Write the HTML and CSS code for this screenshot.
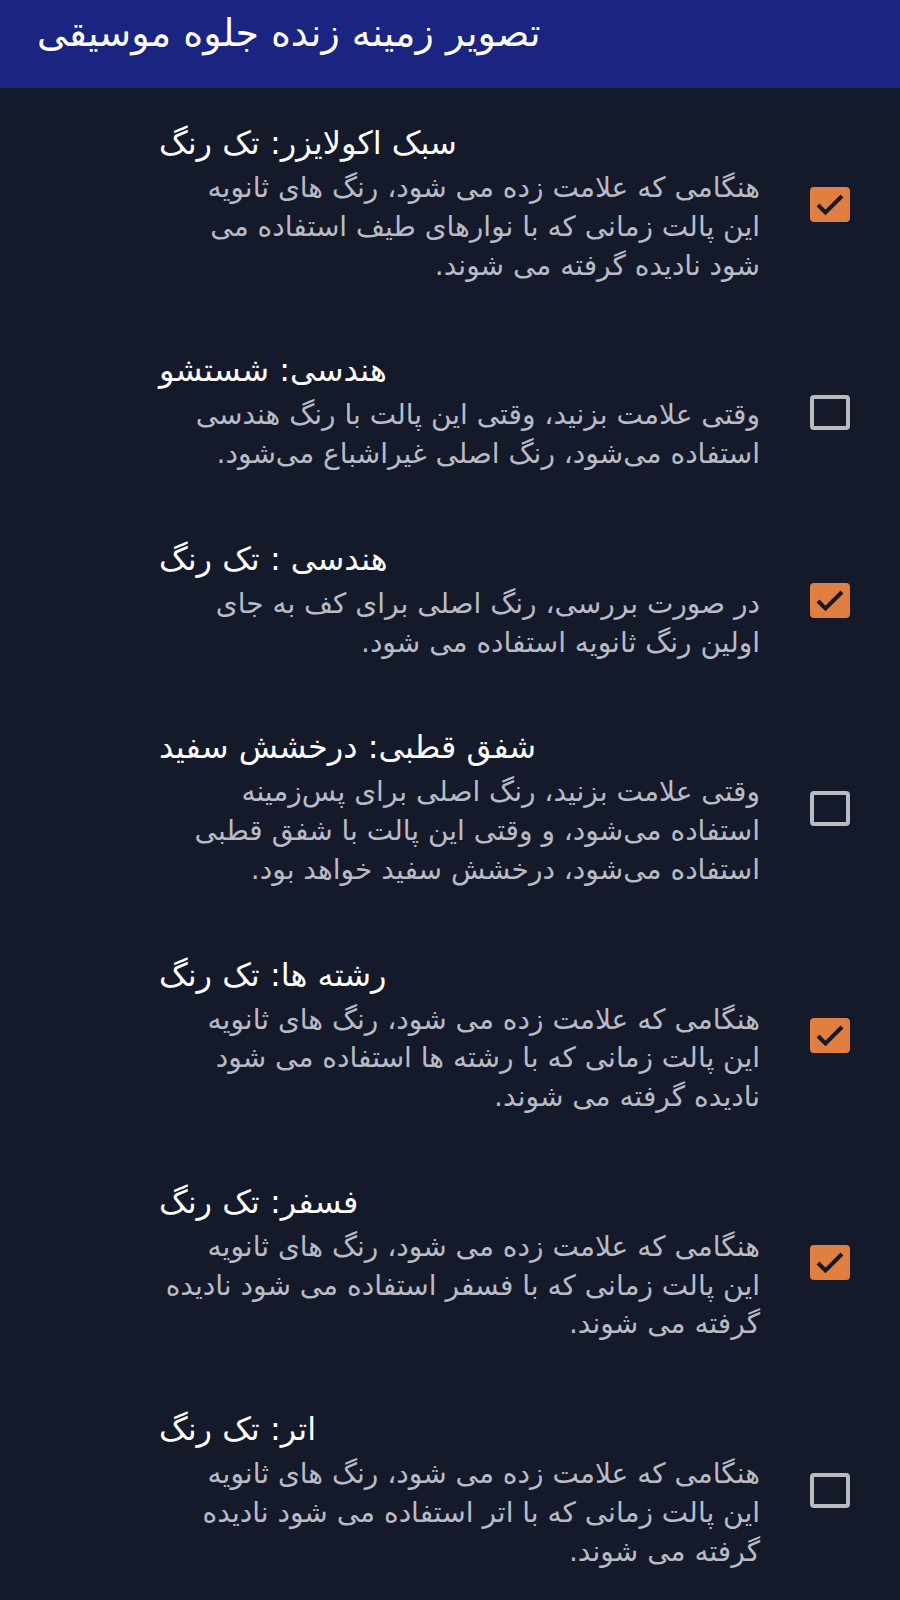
FILE: index.html
```html
<!DOCTYPE html>
<html lang="fa">
<head>
<meta charset="utf-8">
<title>تصویر زمینه زنده جلوه موسیقی</title>
<link rel="stylesheet" href="styles.css">
</head>
<body>
<header class="appbar"><h1 class="appbar-title">تصویر زمینه زنده جلوه موسیقی</h1></header>
<main class="list">
  <div class="item">
    <div class="text">
      <div class="title">سبک اکولایزر: تک رنگ</div>
      <div class="summary">هنگامی که علامت زده می شود، رنگ های ثانویه<br>این پالت زمانی که با نوارهای طیف استفاده می<br>شود نادیده گرفته می شوند.</div>
    </div>
    <div class="box checked"><svg viewBox="0 0 40 35" class="tick"><path d="M8 18 L15.5 25.5 L32 9" /></svg></div>
  </div>
  <div class="item">
    <div class="text">
      <div class="title">هندسی: شستشو</div>
      <div class="summary">وقتی علامت بزنید، وقتی این پالت با رنگ هندسی<br>استفاده می‌شود، رنگ اصلی غیراشباع می‌شود.</div>
    </div>
    <div class="box"></div>
  </div>
  <div class="item">
    <div class="text">
      <div class="title">هندسی : تک رنگ</div>
      <div class="summary">در صورت بررسی، رنگ اصلی برای کف به جای<br>اولین رنگ ثانویه استفاده می شود.</div>
    </div>
    <div class="box checked"><svg viewBox="0 0 40 35" class="tick"><path d="M8 18 L15.5 25.5 L32 9" /></svg></div>
  </div>
  <div class="item">
    <div class="text">
      <div class="title">شفق قطبی: درخشش سفید</div>
      <div class="summary">وقتی علامت بزنید، رنگ اصلی برای پس‌زمینه<br>استفاده می‌شود، و وقتی این پالت با شفق قطبی<br>استفاده می‌شود، درخشش سفید خواهد بود.</div>
    </div>
    <div class="box"></div>
  </div>
  <div class="item">
    <div class="text">
      <div class="title">رشته ها: تک رنگ</div>
      <div class="summary">هنگامی که علامت زده می شود، رنگ های ثانویه<br>این پالت زمانی که با رشته ها استفاده می شود<br>نادیده گرفته می شوند.</div>
    </div>
    <div class="box checked"><svg viewBox="0 0 40 35" class="tick"><path d="M8 18 L15.5 25.5 L32 9" /></svg></div>
  </div>
  <div class="item">
    <div class="text">
      <div class="title">فسفر: تک رنگ</div>
      <div class="summary">هنگامی که علامت زده می شود، رنگ های ثانویه<br>این پالت زمانی که با فسفر استفاده می شود نادیده<br>گرفته می شوند.</div>
    </div>
    <div class="box checked"><svg viewBox="0 0 40 35" class="tick"><path d="M8 18 L15.5 25.5 L32 9" /></svg></div>
  </div>
  <div class="item">
    <div class="text">
      <div class="title">اتر: تک رنگ</div>
      <div class="summary">هنگامی که علامت زده می شود، رنگ های ثانویه<br>این پالت زمانی که با اتر استفاده می شود نادیده<br>گرفته می شوند.</div>
    </div>
    <div class="box"></div>
  </div>
</main>
</body>
</html>
```

FILE: styles.css
```css
html, body {
  margin: 0;
  padding: 0;
  background: #151a2b;
}
body {
  width: 900px;
  min-height: 1600px;
  font-family: "DejaVu Sans", "Noto Sans", sans-serif;
  overflow: hidden;
}
.appbar {
  background: #1b2480;
  height: 88px;
  box-sizing: border-box;
  padding-left: 37px;
  display: flex;
  align-items: flex-start;
}
.appbar-title {
  margin: 0;
  padding-top: 10px;
  font-weight: normal;
  font-size: 38px;
  line-height: 46px;
  color: #ffffff;
  direction: rtl;
}
.list {
  display: flex;
  flex-direction: column;
}
.item {
  display: flex;
  align-items: center;
  padding: 35px 50px 30px 159px;
}
.text {
  width: 601px;
  direction: rtl;
}
.title {
  text-align: left;
  font-size: 32px;
  line-height: 40px;
  color: #ffffff;
  margin-bottom: 6px;
}
.summary {
  text-align: right;
  font-size: 28px;
  line-height: 38.75px;
  color: #b9bbc4;
}
.box {
  margin-left: 50px;
  width: 40px;
  height: 35px;
  box-sizing: border-box;
  border: 4px solid #b9bac2;
  border-radius: 4px;
  flex: none;
}
.box.checked {
  background: #e07f3f;
  border: none;
}
.tick {
  display: block;
  width: 40px;
  height: 35px;
}
.tick path {
  fill: none;
  stroke: #151a2b;
  stroke-width: 4;
}
```
